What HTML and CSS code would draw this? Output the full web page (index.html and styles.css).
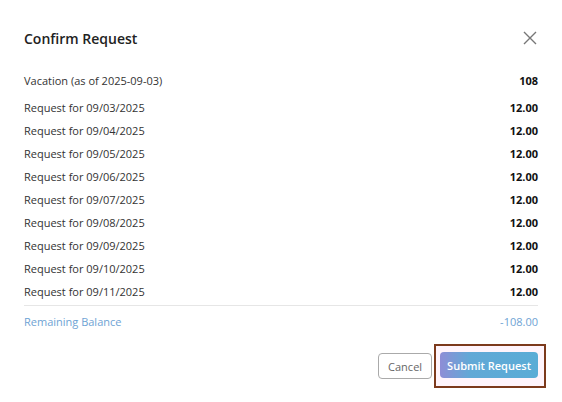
FILE: index.html
```html
<!DOCTYPE html>
<html lang="en">
<head>
  <meta charset="UTF-8">
  <title>Confirm Request</title>
  <link rel="stylesheet" href="styles.css">
</head>
<body>
  <div class="modal">
    <div class="modal-header">
      <h2>Confirm Request</h2>
      <button class="close-btn" aria-label="Close">
        <svg width="14" height="14" viewBox="0 0 14 14">
          <path d="M1 1 L13 13 M13 1 L1 13" stroke="#777" stroke-width="1.4" fill="none"/>
        </svg>
      </button>
    </div>

    <div class="row balance">
      <span>Vacation (as of 2025-09-03)</span>
      <b>108</b>
    </div>

    <div class="requests">
      <div class="row"><span>Request for 09/03/2025</span><b>12.00</b></div>
      <div class="row"><span>Request for 09/04/2025</span><b>12.00</b></div>
      <div class="row"><span>Request for 09/05/2025</span><b>12.00</b></div>
      <div class="row"><span>Request for 09/06/2025</span><b>12.00</b></div>
      <div class="row"><span>Request for 09/07/2025</span><b>12.00</b></div>
      <div class="row"><span>Request for 09/08/2025</span><b>12.00</b></div>
      <div class="row"><span>Request for 09/09/2025</span><b>12.00</b></div>
      <div class="row"><span>Request for 09/10/2025</span><b>12.00</b></div>
      <div class="row"><span>Request for 09/11/2025</span><b>12.00</b></div>
    </div>

    <div class="row remaining">
      <span>Remaining Balance</span>
      <span>-108.00</span>
    </div>

    <div class="actions">
      <button class="btn-cancel">Cancel</button>
      <span class="focus-box">
        <button class="btn-submit">Submit Request</button>
      </span>
    </div>
  </div>
</body>
</html>
```

FILE: styles.css
```css
body {
  margin: 0;
  background-color: white;
  font-family: "Open Sans", Arial, sans-serif;
  color: #333;
}
.modal {
  width: 514px;
  padding: 26px 24px 0 24px;
}
.modal-header {
  display: flex;
  justify-content: space-between;
  align-items: center;
  height: 24px;
  margin-bottom: 19px;
}
.modal-header h2 {
  margin: 0;
  font-size: 14px;
  font-weight: 600;
  color: #222;
}
.close-btn {
  background: none;
  border: none;
  padding: 0;
  margin-right: 1px;
  width: 14px;
  height: 14px;
  cursor: pointer;
}
.row {
  display: flex;
  justify-content: space-between;
  align-items: center;
  height: 23px;
  font-size: 11px;
}
.row b {
  font-weight: 700;
  color: #111;
}
.balance {
  margin-bottom: 4px;
}
.requests {
  border-bottom: 1px solid #e6e6e6;
  padding-bottom: 2px;
}
.remaining {
  margin-top: 4px;
  color: #6ea3d4;
}
.actions {
  display: flex;
  justify-content: flex-end;
  align-items: center;
  gap: 2px;
  margin-top: 11px;
  margin-right: -8px;
}
.btn-cancel {
  font-family: inherit;
  font-size: 11px;
  color: #666;
  background: white;
  border: 1px solid #aaa;
  border-radius: 4px;
  height: 26px;
  padding: 0 9px;
}
.focus-box {
  display: inline-flex;
  border: 2px solid #7c3a1c;
  padding: 6px 6px 8px 4px;
  background: #fff4fb;
}
.btn-submit {
  font-family: inherit;
  font-size: 11px;
  font-weight: 600;
  color: white;
  background: linear-gradient(90deg, #8e8dd6 0%, #62a8d6 30%, #5aacd6 100%);
  border: none;
  border-radius: 4px;
  height: 26px;
  padding: 0 7px;
}
```
